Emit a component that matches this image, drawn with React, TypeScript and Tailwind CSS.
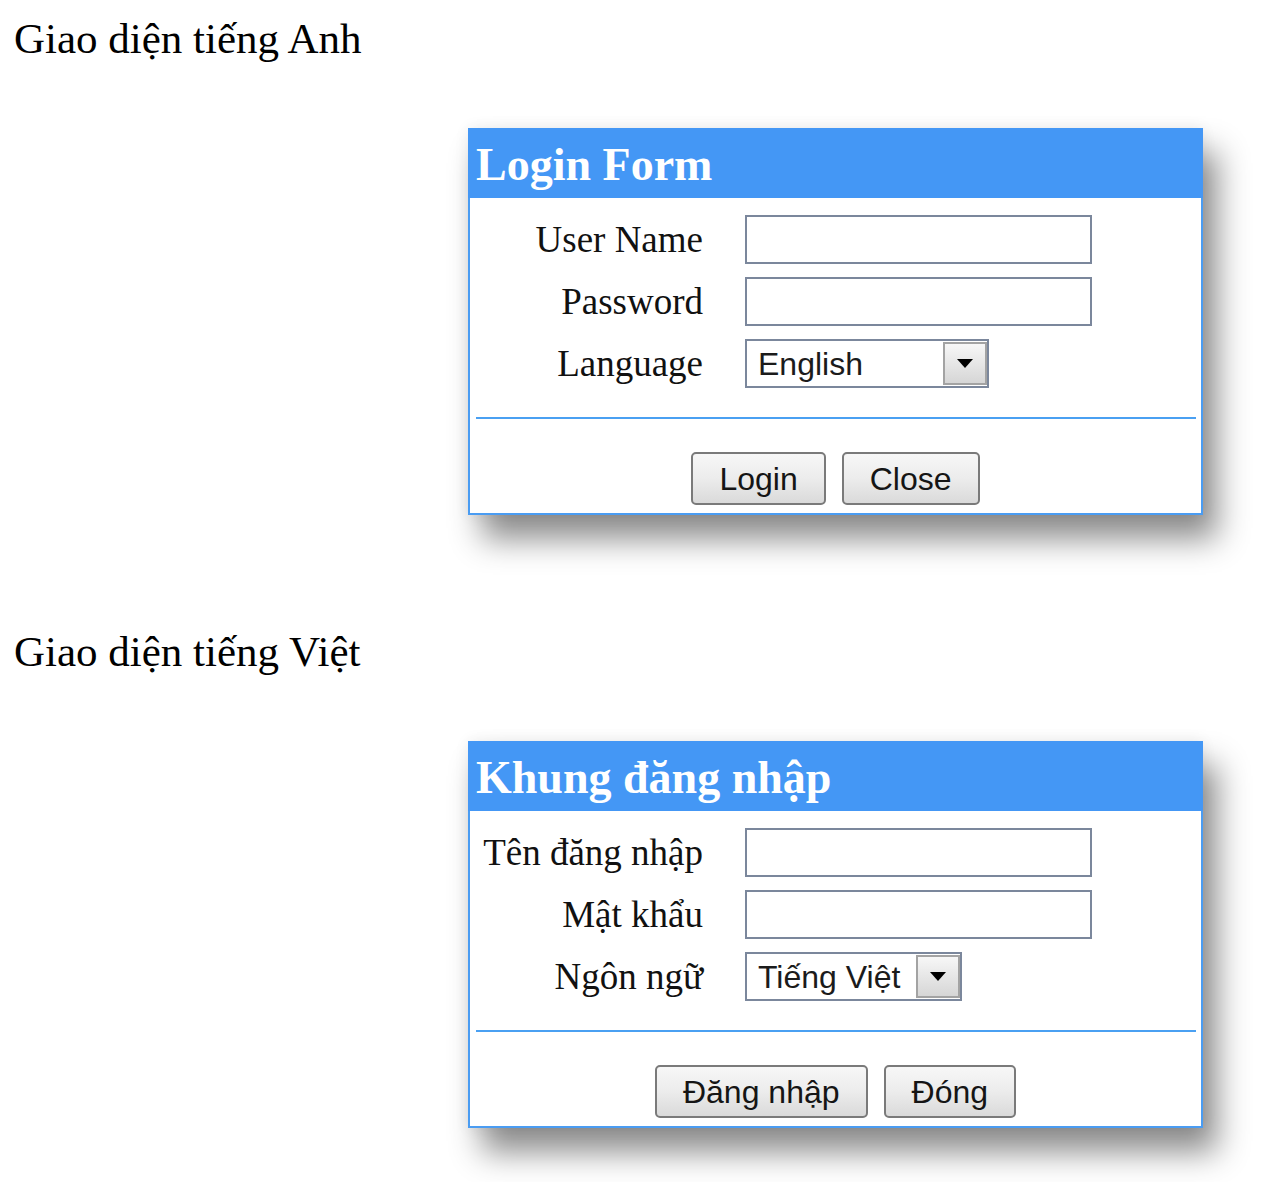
import React from "react";

const serif = "font-['Liberation_Serif','Times_New_Roman',serif]";
const sans = "font-['Liberation_Sans',Arial,sans-serif]";

type FormProps = {
  title: string;
  labels: [string, string, string];
  language: string;
  selectWidth: string;
  buttons: [string, string];
};

function Select({ value, widthClass }: { value: string; widthClass: string }) {
  return (
    <div
      className={`flex h-[49px] items-stretch border-2 border-[#7b879c] bg-white ${widthClass}`}
    >
      <span className={`flex flex-1 items-center pl-[11px] text-[32px] leading-none text-[#1b1b1b] ${sans}`}>
        {value}
      </span>
      <span className="my-[1px] flex w-[44px] items-center justify-center border-2 border-[#a3a3a3] bg-gradient-to-b from-[#f7f7f7] to-[#d6d6d6]">
        <svg width="16" height="9" viewBox="0 0 16 9">
          <path d="M0 0h16L8 9z" fill="#000" />
        </svg>
      </span>
    </div>
  );
}

function LoginForm({ title, labels, language, selectWidth, buttons }: FormProps) {
  return (
    <div className="ml-[468px] w-[735px] bg-white shadow-[14px_24px_30px_rgba(0,0,0,0.45),0_0_14px_rgba(0,0,0,0.07)]">
      <div className="flex h-[70px] items-center bg-[#4497f5] pl-2 pt-[4px]">
        <h2 className={`text-[46px] font-bold leading-none text-white ${serif}`}>{title}</h2>
      </div>
      <div className="border-x-2 border-b-2 border-[#4a9cf2] pt-[17px] pb-[8px]">
        <div className="grid grid-cols-[233px_347px] items-center gap-x-[42px] gap-y-[13px]">
          {labels.map((label, i) => (
            <React.Fragment key={label}>
              <span className={`text-right text-[37px] leading-none text-[#111] ${serif}`}>{label}</span>
              {i < 2 ? (
                <div className="h-[49px] border-2 border-[#7b879c] bg-white" />
              ) : (
                <Select value={language} widthClass={selectWidth} />
              )}
            </React.Fragment>
          ))}
        </div>
        <div className="mt-[29px] ml-[6px] mr-[5px] h-[2px] bg-[#4aa0f2]" />
        <div className="mt-[33px] flex justify-center gap-[16px]">
          {buttons.map((b) => (
            <button
              key={b}
              className={`h-[53px] rounded-[5px] border-2 border-[#7a7a7a] bg-gradient-to-b from-[#f7f7f7] via-[#ececec] to-[#dadada] px-[26px] text-[32px] leading-none text-[#151515] ${sans}`}
            >
              {b}
            </button>
          ))}
        </div>
      </div>
    </div>
  );
}

export default function App() {
  return (
    <div className="min-h-[1182px] bg-white">
      <h1 className={`ml-[14px] pt-[17px] text-[43px] leading-none text-black ${serif}`}>
        Giao diện tiếng Anh
      </h1>
      <div className="mt-[68px]">
        <LoginForm
          title="Login Form"
          labels={["User Name", "Password", "Language"]}
          language="English"
          selectWidth="w-[244px]"
          buttons={["Login", "Close"]}
        />
      </div>
      <h1 className={`ml-[14px] mt-[115px] text-[43px] leading-none text-black ${serif}`}>
        Giao diện tiếng Việt
      </h1>
      <div className="mt-[68px]">
        <LoginForm
          title="Khung đăng nhập"
          labels={["Tên đăng nhập", "Mật khẩu", "Ngôn ngữ"]}
          language="Tiếng Việt"
          selectWidth="w-[217px]"
          buttons={["Đăng nhập", "Đóng"]}
        />
      </div>
    </div>
  );
}
